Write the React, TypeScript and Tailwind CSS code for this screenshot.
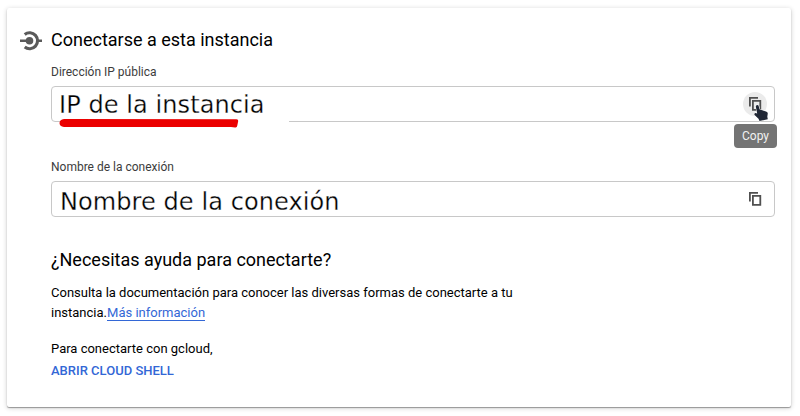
import React from "react";

function CopyIcon() {
  return (
    <svg width="14" height="14" viewBox="0 0 14 14" fill="none" stroke="#505050" strokeWidth="1.8" className="block">
      <path d="M1.9 9.6V0.9H10" />
      <path d="M4.9 3.8H12.3V12.8H4.9Z" />
    </svg>
  );
}

function ConnectIcon() {
  return (
    <svg width="22" height="20" viewBox="0 0 22 20" fill="none" className="block">
      <path d="M0 8.4H7V11.1H0ZM17 8.4H22V11.1H17Z" fill="#5a5a5a" />
      <circle cx="9.5" cy="9.75" r="3.8" fill="#5a5a5a" />
      <path d="M4.7 3.4A8 8 0 1 1 4.7 16.1" stroke="#5a5a5a" strokeWidth="3.1" />
    </svg>
  );
}

function PointerCursor() {
  return (
    <svg width="18" height="21" viewBox="0 0 18 21" className="absolute left-[9px] top-[10px]">
      <path
        d="M3.8 4.6Q3.8 3 5.3 3Q6.5 3 6.8 4.4L7.6 7.6L14 9.4Q16.2 10.1 15.7 12.1L15.3 14.8L15.8 17.2L7.5 19L6.5 16.8L2.6 13.1Q1.8 11.6 3.4 11L5.2 11.4Z"
        fill="#202735"
        stroke="white"
        strokeWidth="1"
        paintOrder="stroke"
      />
    </svg>
  );
}

export default function App() {
  return (
    <div className="h-[416px] w-[800px] bg-white pt-2 pl-[7px] font-['Roboto',sans-serif] text-black">
      <main className="h-[399px] w-[784px] rounded-[2px] bg-white pl-3 shadow-[0_1px_1px_rgba(0,0,0,0.34),0_1px_5px_rgba(0,0,0,0.2)]">
        <header className="flex h-[54px] items-start pt-5">
          <div className="w-8 pl-px pt-[3px]"><ConnectIcon /></div>
          <h1 className="text-[18px] leading-6">Conectarse a esta instancia</h1>
        </header>
        <div className="w-[756px] pl-8">
          <div className="h-6 text-[12px] leading-5 text-[#3c3c3c]">Dirección IP pública</div>
          <div className="relative flex h-9 w-[724px] items-center justify-between rounded border border-[#c8c8c8] pl-[7px] pr-[7px]">
            <span className="whitespace-nowrap pt-0.5 font-['DejaVu_Sans',sans-serif] text-[24px] leading-8 tracking-[0.08px] [-webkit-text-stroke:0.28px_white]">IP de la instancia</span>
            <div className="relative flex h-6 w-6 items-center justify-center rounded-full bg-[#ebebeb]">
              <CopyIcon />
              <PointerCursor />
            </div>
            <div className="absolute left-[9px] top-[34px] h-[2px] w-[228px] bg-white" />
            <svg width="182" height="12" viewBox="0 0 182 12" className="absolute left-[7px] top-[31px]">
              <path d="M5 0.9L177 1.2Q179.5 1 179.2 3L178.3 7.5Q178 9.8 176 9.4L172 8.9L5 9.1Q0.5 8.5 0.5 5Q0.7 1.5 5 0.9Z" fill="#eb0000" />
            </svg>
            <div className="absolute right-[-3px] top-[37px] flex h-6 w-[43px] items-center justify-center rounded bg-[#747474] text-[12px] text-[#f1f1f1]">Copy</div>
          </div>
          <div className="mt-[35px] h-6 text-[12px] leading-5 text-[#3c3c3c]">Nombre de la conexión</div>
          <div className="flex h-9 w-[724px] items-center justify-between rounded border border-[#c8c8c8] pl-2 pr-3">
            <span className="whitespace-nowrap pt-1.5 font-['DejaVu_Sans',sans-serif] text-[24px] leading-8 tracking-[0.08px] [-webkit-text-stroke:0.28px_white]">Nombre de la conexión</span>
            <CopyIcon />
          </div>
          <h2 className="mt-[31px] text-[18px] leading-6">¿Necesitas ayuda para conectarte?</h2>
          <p className="mt-[11px] w-[480px] text-[13px] leading-5">
            Consulta la documentación para conocer las diversas formas de conectarte a tu
            <br />
            instancia.<a className="border-b border-[#3367d6] text-[#3367d6]">Más información</a>
          </p>
          <p className="mt-4 text-[13px] leading-5">Para conectarte con gcloud,</p>
          <button className="mt-0.5 block text-[13px] font-medium leading-5 text-[#3367d6]">ABRIR CLOUD SHELL</button>
        </div>
      </main>
    </div>
  );
}
